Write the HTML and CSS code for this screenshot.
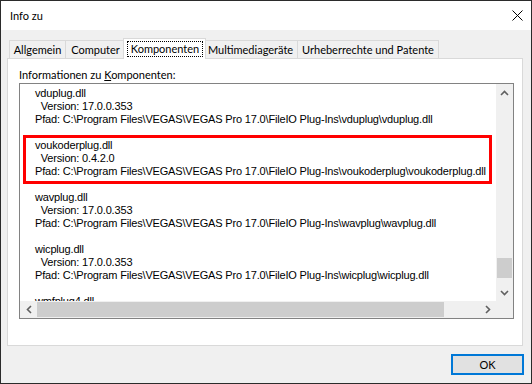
FILE: index.html
```html
<!DOCTYPE html>
<html lang="de">
<head>
<meta charset="utf-8">
<title>Info zu</title>
<link rel="stylesheet" href="styles.css">
</head>
<body>
<div class="window">
  <div class="titlebar">
    <span class="title">Info zu</span>
    <svg class="close" width="11" height="11" viewBox="0 0 11 11"><path d="M0.5 0.5L10.5 10.5M10.5 0.5L0.5 10.5" stroke="#000" stroke-width="1" fill="none"/></svg>
  </div>
  <div class="body">
    <div class="tabs">
      <div class="tab t1">Allgemein</div>
      <div class="tab t2">Computer</div>
      <div class="tab t3 sel"><span class="focus">Komponenten</span></div>
      <div class="tab t4">Multimediageräte</div>
      <div class="tab t5">Urheberrechte und Patente</div>
    </div>
    <div class="panel">
      <div class="label">Informationen zu <u>K</u>omponenten:</div>
      <div class="listbox">
        <div class="content">
          <div class="entry">
            <div class="line">vduplug.dll</div>
            <div class="line">  Version: 17.0.0.353</div>
            <div class="line">Pfad: C:\Program Files\VEGAS\VEGAS Pro 17.0\FileIO Plug-Ins\vduplug\vduplug.dll</div>
          </div>
          <div class="entry">
            <div class="line">voukoderplug.dll</div>
            <div class="line">  Version: 0.4.2.0</div>
            <div class="line">Pfad: C:\Program Files\VEGAS\VEGAS Pro 17.0\FileIO Plug-Ins\voukoderplug\voukoderplug.dll</div>
          </div>
          <div class="entry">
            <div class="line">wavplug.dll</div>
            <div class="line">  Version: 17.0.0.353</div>
            <div class="line">Pfad: C:\Program Files\VEGAS\VEGAS Pro 17.0\FileIO Plug-Ins\wavplug\wavplug.dll</div>
          </div>
          <div class="entry">
            <div class="line">wicplug.dll</div>
            <div class="line">  Version: 17.0.0.353</div>
            <div class="line">Pfad: C:\Program Files\VEGAS\VEGAS Pro 17.0\FileIO Plug-Ins\wicplug\wicplug.dll</div>
          </div>
          <div class="entry">
            <div class="line">wmfplug4.dll</div>
            <div class="line">  Version: 17.0.0.353</div>
            <div class="line">Pfad: C:\Program Files\VEGAS\VEGAS Pro 17.0\FileIO Plug-Ins\wmfplug4\wmfplug4.dll</div>
          </div>
          <div class="highlight"></div>
        </div>
        <div class="vscroll">
          <div class="sbtn"><svg width="9" height="6" viewBox="0 0 9 6"><path d="M1 5L4.5 1.5L8 5" fill="none" stroke="#606060" stroke-width="1.6"/></svg></div>
          <div class="track"><div class="vthumb"></div></div>
          <div class="sbtn"><svg width="9" height="6" viewBox="0 0 9 6"><path d="M1 1L4.5 4.5L8 1" fill="none" stroke="#606060" stroke-width="1.6"/></svg></div>
        </div>
        <div class="hscroll">
          <div class="sbtn"><svg width="6" height="9" viewBox="0 0 6 9"><path d="M5 1L1.5 4.5L5 8" fill="none" stroke="#606060" stroke-width="1.6"/></svg></div>
          <div class="track"><div class="hthumb"></div></div>
          <div class="sbtn"><svg width="6" height="9" viewBox="0 0 6 9"><path d="M1 1L4.5 4.5L1 8" fill="none" stroke="#606060" stroke-width="1.6"/></svg></div>
        </div>
        <div class="corner"></div>
      </div>
    </div>
    <div class="footer">
      <button class="ok" type="button">OK</button>
    </div>
  </div>
</div>
</body>
</html>
```
FILE: styles.css
```css
html, body {
  margin: 0;
  padding: 0;
}
body {
  width: 532px;
  height: 384px;
  overflow: hidden;
  font-family: Lato, "Noto Sans", sans-serif;
  font-size: 11px;
  color: #000;
}
.window {
  box-sizing: border-box;
  width: 532px;
  height: 384px;
  border: 1px solid #2b2b2b;
  background: #f0f0f0;
  display: flex;
  flex-direction: column;
}
.titlebar {
  height: 29px;
  flex: none;
  background: #fff;
  display: flex;
  align-items: center;
  justify-content: space-between;
  padding: 0 8px 0 9px;
}
.title {
  line-height: 15px;
}
.close {
  display: block;
}
.body {
  flex: 1;
  padding: 8px 8px 0 6px;
  display: flex;
  flex-direction: column;
}
.tabs {
  display: flex;
  align-items: flex-end;
  height: 21px;
  padding-left: 2px;
  position: relative;
  z-index: 1;
}
.tab {
  box-sizing: border-box;
  height: 18px;
  margin-bottom: 1px;
  margin-left: -1px;
  border: 1px solid #d9d9d9;
  border-bottom: 0;
  background: #f0f0f0;
  text-align: center;
  line-height: 15px;
  padding-top: 1px;
  white-space: nowrap;
  flex: none;
}
.t1 { width: 57px; margin-left: 0; }
.t2 { width: 61px; }
.t3 { width: 83px; }
.t4 { width: 95px; }
.t5 { width: 142px; }
.tab.sel {
  height: 21px;
  margin-bottom: 0;
  margin-left: -3px;
  margin-right: -2px;
  background: #fff;
  padding: 2px 2px 0 3px;
  position: relative;
}
.focus {
  display: block;
  box-sizing: border-box;
  height: 16px;
  border: 1px dotted #000;
  line-height: 13px;
  text-align: center;
}
.panel {
  box-sizing: border-box;
  height: 288px;
  flex: none;
  margin-top: -1px;
  background: #fff;
  border: 1px solid #d9d9d9;
  padding: 9px 8px 0 11px;
}
.label {
  height: 15px;
  line-height: 13px;
}
.listbox {
  box-sizing: border-box;
  height: 236px;
  border: 1px solid #828282;
  display: grid;
  grid-template-columns: 1fr 17px;
  grid-template-rows: 1fr 17px;
}
.content {
  position: relative;
  overflow: hidden;
  min-width: 0;
  min-height: 0;
  padding: 3px 0 0 15px;
  font-family: "Liberation Sans", Arial, sans-serif;
  font-size: 11px;
  line-height: 13px;
  letter-spacing: -0.17px;
  white-space: nowrap;
}
.line {
  white-space: pre;
  height: 13px;
}
.entry {
  margin-bottom: 13px;
}
.highlight {
  position: absolute;
  left: 3px;
  top: 51px;
  width: 469px;
  height: 49px;
  box-sizing: border-box;
  border: 3px solid #ff0000;
}
.vscroll {
  background: #f0f0f0;
  display: flex;
  flex-direction: column;
  min-height: 0;
}
.hscroll {
  background: #f0f0f0;
  display: flex;
}
.sbtn {
  flex: none;
  width: 17px;
  height: 17px;
  display: flex;
  align-items: center;
  justify-content: center;
}
.sbtn svg {
  display: block;
}
.track {
  flex: 1;
  position: relative;
}
.vthumb {
  position: absolute;
  left: 1px;
  right: 1px;
  top: 157px;
  height: 20px;
  background: #cdcdcd;
}
.hthumb {
  position: absolute;
  top: 1px;
  bottom: 1px;
  left: 0;
  width: 407px;
  background: #cdcdcd;
}
.corner {
  background: #f0f0f0;
}
.footer {
  display: flex;
  justify-content: flex-end;
  padding-top: 8px;
  margin-right: -1px;
}
.ok {
  box-sizing: border-box;
  width: 73px;
  height: 21px;
  margin: 0;
  padding: 0;
  border: 2px solid #0078d7;
  background: #e1e1e1;
  font-family: Lato, "Noto Sans", sans-serif;
  font-size: 11px;
  color: #000;
  line-height: 15px;
}
```
